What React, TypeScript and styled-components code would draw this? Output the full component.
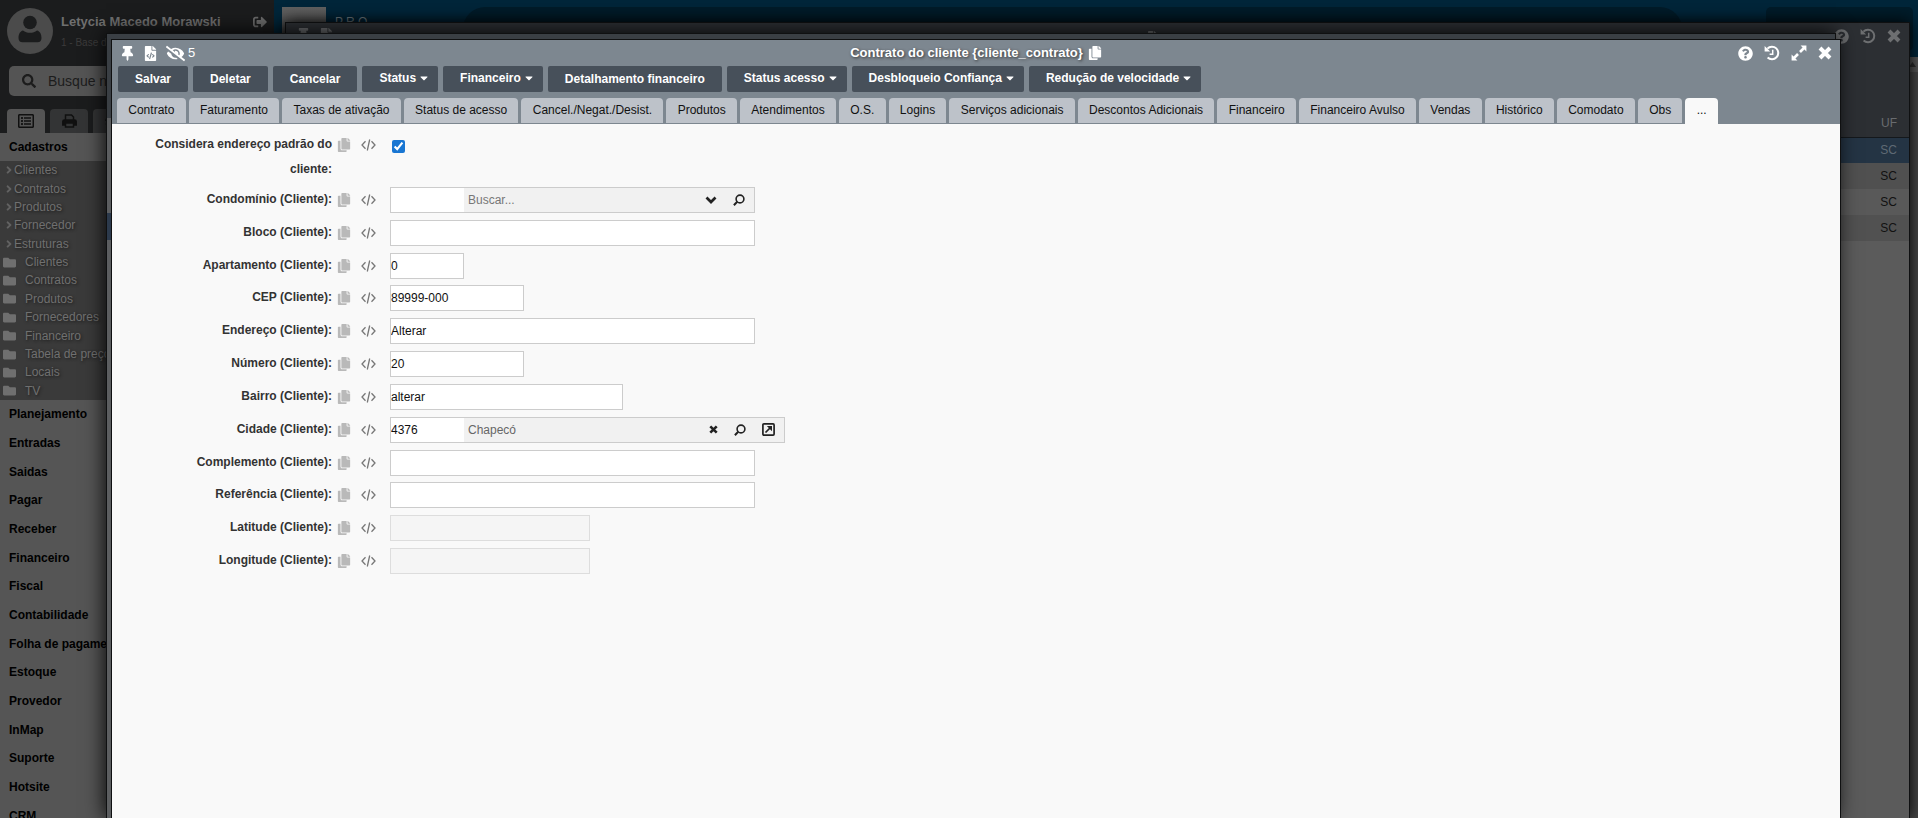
import React, { useId, useState } from "react";
import styled, { createGlobalStyle, css } from "styled-components";
import {
  FaAngleRight,
  FaCaretDown,
  FaCopy,
  FaEyeSlash,
  FaFileCode,
  FaFolder,
  FaQuestionCircle,
  FaRegListAlt,
  FaSearch,
  FaSignOutAlt,
  FaThumbtack,
} from "react-icons/fa";

const GlobalStyle = createGlobalStyle`
  * { box-sizing: border-box; }
  html, body, #root { height: 100%; }
  body {
    margin: 0;
    overflow: hidden;
    background: #5b5b5b;
    color: #333;
    font: 12px/16px "Liberation Sans", Arial, sans-serif;
  }
  button, input { font: inherit; color: inherit; margin: 0; }
  button { border: 0; padding: 0; background: none; cursor: pointer; }
  svg { display: block; }
`;

const Desktop = styled.div`
  position: relative;
  display: flex;
  height: 100vh;
  overflow: hidden;
`;

/* ---------- sidebar ---------- */

const Sidebar = styled.aside`
  flex: 0 0 274px;
  display: flex;
  flex-direction: column;
  overflow: hidden;
  background: #555;
`;

const SidebarTop = styled.div`
  background: #1b1c1d;
  padding: 8px 7px 0;
`;

const Profile = styled.div`
  display: flex;
  height: 46px;
`;

const ProfileText = styled.div`
  flex: 1;
  padding: 6px 0 0 8px;
`;

const ProfileName = styled.div`
  font-size: 13px;
  font-weight: bold;
  color: #6f6f6f;
`;

const ProfileBase = styled.div`
  margin-top: 5px;
  font-size: 10px;
  color: #3b3b3b;
`;

const LogoutButton = styled.button`
  align-self: flex-start;
  margin-top: 7px;
  color: #6a6a6a;
  font-size: 14px;
`;

const SearchBox = styled.label`
  display: flex;
  align-items: center;
  gap: 12px;
  height: 30px;
  margin: 12px 2px 13px;
  padding-left: 13px;
  border-radius: 5px;
  background: #545454;
  color: #1c1c1c;
  font-size: 14px;
`;

const SearchInput = styled.input`
  flex: 1;
  min-width: 0;
  padding: 0;
  border: 0;
  outline: 0;
  background: none;
  &::placeholder { color: #1c1c1c; opacity: 1; }
`;

const MenuTabs = styled.div`
  display: flex;
  gap: 5px;
`;

const MenuTab = styled.button<{ $active?: boolean }>`
  display: flex;
  align-items: center;
  justify-content: center;
  width: 38px;
  height: 24px;
  border-radius: 4px 4px 0 0;
  background: ${(p) => (p.$active ? "#555" : "#333435")};
  color: #101010;
  font-size: 16px;
`;

const MenuHeading = styled.button`
  display: flex;
  align-items: center;
  width: 100%;
  min-height: 28px;
  padding-left: 9px;
  color: #000;
  font-weight: bold;
  white-space: nowrap;
`;

const Tree = styled.ul`
  display: grid;
  grid-auto-rows: 1fr;
  flex: none;
  min-height: 239px;
  margin: 0;
  padding: 0 0 0 3px;
  list-style: none;
  background: #3a3a3a;
`;

const TreeItem = styled.li`
  display: flex;
  align-items: center;
  color: #707070;
  text-shadow: 1px 1px 3px #1c1c1c;
  white-space: nowrap;
`;

const TreeIcon = styled.span<{ $folder?: boolean }>`
  width: ${(p) => (p.$folder ? 22 : 11)}px;
  font-size: ${(p) => (p.$folder ? 13 : 12)}px;
  color: ${(p) => (p.$folder ? "#6f6f6f" : "#626262")};
`;

const Sections = styled.div`
  display: grid;
  grid-auto-rows: 1fr;
  flex: none;
  min-height: 430px;
`;

/* ---------- page behind the windows ---------- */

const Backdrop = styled.div`
  flex: 1;
  display: flex;
  flex-direction: column;
  min-width: 0;
`;

const TopBar = styled.header`
  display: flex;
  height: 57px;
  padding: 7px 5px 0 8px;
  background: #00263a;
`;

const LogoTile = styled.div`
  width: 44px;
  height: 44px;
  background: linear-gradient(#616161, #4c4c4c);
`;

const Brand = styled.div`
  width: 137px;
  padding: 7px 0 0 9px;
  color: #75828a;
  white-space: nowrap;
`;

const BarPanel = styled.div<{ $small?: boolean }>`
  height: 44px;
  background: #001c2a;
  ${(p) =>
    p.$small
      ? css`flex: 0 0 147px; margin-left: 84px; border-radius: 5px;`
      : css`flex: 1; border-radius: 22px;`}
`;

const ScrollTrack = styled.div`
  flex: 1;
  align-self: flex-end;
  width: 12px;
  background: #464646;
`;

const ScrollButton = styled.button`
  display: flex;
  align-items: center;
  justify-content: center;
  width: 12px;
  height: 15px;
  background: #575757;
`;

/* ---------- windows ---------- */

const Window = styled.section<{ $top: number; $left: number; $right: number }>`
  position: absolute;
  top: ${(p) => p.$top}px;
  left: ${(p) => p.$left}px;
  right: ${(p) => p.$right}px;
  bottom: 0;
  display: flex;
  flex-direction: column;
  border: 1px solid #0f1011;
  border-bottom: 0;
`;

const ListWindow = styled(Window)`
  background: #5b5b5b;
  box-shadow: 0 0 15px #000;
`;

const ListHeader = styled.div`
  display: grid;
  grid-template-columns: 1fr auto 1fr;
  align-items: start;
  height: 86px;
  padding: 5px 8px 0 10px;
  background: #2c2f33;
  color: #6d6f71;
`;

const ListCopy = styled.span`
  padding: 3px 0 0 104px;
`;

const ClientTable = styled.table`
  width: 100%;
  border-collapse: collapse;
  color: #111;
  text-align: right;
`;

const HeadCell = styled.th`
  height: 28px;
  padding: 0 12px;
  border-bottom: 1px solid #14181c;
  background: #2c2f33;
  color: #696c6f;
  font-weight: normal;
`;

const Cell = styled.td<{ $tone: string; $ink: string }>`
  height: 26px;
  padding: 0 12px;
  background: ${(p) => p.$tone};
  color: ${(p) => p.$ink};
`;

const MiddleWindow = styled(Window)`
  background: linear-gradient(#3a3f44 0 84px, #5c5e60 84px 179px, #2c3a4c 179px 206px, #5c5e60 206px);
  box-shadow: 0 0 20px #000;
`;

const ContractWindow = styled(Window)`
  background: #f9f9f9;
`;

const WindowHeader = styled.header`
  background: #7d8790;
`;

const TitleBar = styled.div`
  display: grid;
  grid-template-columns: 1fr auto 1fr;
  align-items: center;
  height: 26px;
  padding: 0 8px;
  color: #fff;
`;

const IconRow = styled.div<{ $end?: boolean; $gap: number }>`
  display: flex;
  align-items: center;
  justify-content: ${(p) => (p.$end ? "flex-end" : "flex-start")};
  gap: ${(p) => p.$gap}px;
`;

const IconButton = styled.button<{ $size?: number }>`
  display: flex;
  align-items: center;
  gap: 3px;
  font-size: ${(p) => p.$size ?? 15}px;
`;

const HiddenCount = styled.span`
  font-size: 13px;
`;

const Title = styled.h1`
  display: flex;
  align-items: center;
  gap: 5px;
  margin: 0;
  font-size: 13px;
  font-weight: bold;
  text-shadow: 1px 1px 3px #333;
`;

const Toolbar = styled.div`
  display: flex;
  gap: 5px;
  padding: 0 6px;
`;

const ToolButton = styled.button<{ $menu?: boolean }>`
  display: flex;
  align-items: center;
  gap: 2px;
  height: 26px;
  padding: ${(p) => (p.$menu ? "0 8px 2px 17px" : "0 17px")};
  border-radius: 2px;
  background: #47505a;
  color: #fff;
  font-weight: bold;
  white-space: nowrap;
`;

const TabStrip = styled.nav`
  display: flex;
  gap: 3px;
  max-width: 1611px;
  padding: 6px 5px 0;
`;

const Tab = styled.button<{ $active?: boolean }>`
  flex: 1 0 auto;
  height: 26px;
  padding: 0 11px 2px;
  border-bottom: 1px solid ${(p) => (p.$active ? "#f9f9f9" : "#7d8790")};
  border-radius: 4px 4px 0 0;
  background: ${(p) => (p.$active ? "#f9f9f9" : "#bdc2c9")};
  background-clip: padding-box;
  color: #111;
  white-space: nowrap;
`;

/* ---------- form ---------- */

const Form = styled.form`
  padding-top: 8px;
`;

const Fields = styled.div`
  display: grid;
  grid-auto-rows: 1fr;
  min-height: 394px;
  margin-top: 5px;
`;

const Row = styled.div`
  display: grid;
  grid-template-columns: 200px 12px 15px 1fr;
  align-items: start;
  padding-left: 20px;
`;

const FieldLabel = styled.label`
  font-weight: bold;
  line-height: 25px;
  text-align: right;
`;

const CopyButton = styled.button`
  margin: 6px 0 0 5px;
  color: #b9b9b9;
  font-size: 14px;
`;

const CodeButton = styled.button`
  margin: 7px 0 0 17px;
  color: #777;
`;

const Control = styled.div`
  display: flex;
  padding-left: 31px;
`;

const TextInput = styled.input<{ $width: number }>`
  width: ${(p) => p.$width}px;
  height: 26px;
  padding: 0;
  border: 1px solid #ccc;
  outline: 0;
  background: #fff;
  color: #111;
  &:disabled { border-color: #ddd; background: #f5f5f5; }
`;

const CheckInput = styled.input`
  width: 13px;
  height: 13px;
  margin: 8px 0 0 2px;
  accent-color: #1976d2;
`;

const Lookup = styled.div<{ $width: number }>`
  display: flex;
  align-items: center;
  width: ${(p) => p.$width}px;
  height: 26px;
  border: 1px solid #ccc;
  background: #f1f1f1;
  color: #222;
`;

const LookupCode = styled.input`
  width: 73px;
  height: 24px;
  padding: 0;
  border: 0;
  outline: 0;
  background: #fff;
  color: #111;
`;

const LookupText = styled.input`
  flex: 1;
  min-width: 0;
  padding: 0 4px;
  border: 0;
  outline: 0;
  background: none;
  color: #666;
  &::placeholder { color: #777; opacity: 1; }
`;

const LookupActions = styled.div`
  display: flex;
  align-items: center;
  gap: 16px;
  padding-right: 9px;
`;

/* ---------- drawings ---------- */

const Avatar = () => (
  <svg width="46" height="46" viewBox="0 0 46 46" aria-hidden="true">
    <circle cx="23" cy="23" r="23" fill="#4b4b4b" />
    <circle cx="23" cy="14.5" r="6.8" fill="#1b1c1d" />
    <path d="M16 22.500c2 1.600 4.300 2.300 7 2.300s5-.7 7-2.300c3 .6 4.500 3.800 4.500 7.500 0 2.800-1.500 4.200-4 4.200h-15c-2.500 0-4-1.400-4-4.200 0-3.700 1.500-6.900 4.500-7.500z" fill="#1b1c1d" />
  </svg>
);

const PrinterIcon = () => (
  <svg width="15" height="14" viewBox="0 0 15 14" fill="none" stroke="currentColor" strokeWidth="1.500" aria-hidden="true">
    <path d="M3.500 6V1h6l2 2v3" />
    <path d="M3 11H.8V7.500q0-1.500 1.500-1.500h10.400q1.500 0 1.500 1.500V11H12" fill="currentColor" />
    <path d="M3.500 9h8v4h-8z" fill="#333435" />
  </svg>
);

const GearIcon = () => (
  <svg width="15" height="15" viewBox="0 0 15 15" fill="none" stroke="currentColor" aria-hidden="true">
    <circle cx="7.500" cy="7.500" r="4" strokeWidth="3" />
    <circle cx="7.500" cy="7.500" r="6.300" strokeWidth="2" strokeDasharray="2.500 2.450" />
  </svg>
);

const CodeIcon = () => (
  <svg width="15" height="12" viewBox="0 0 15 12" fill="none" stroke="currentColor" strokeWidth="1.300" aria-hidden="true">
    <path d="M4.500 2.200 1 6l3.500 3.800M10.500 2.200 14 6l-3.500 3.800M8.700.5 6.300 11.500" />
  </svg>
);

const LensIcon = () => (
  <svg width="12" height="12" viewBox="0 0 12 12" fill="none" stroke="currentColor" strokeWidth="1.600" aria-hidden="true">
    <circle cx="7" cy="5" r="3.900" />
    <path d="M4.200 7.800.9 11.200" strokeWidth="2" />
  </svg>
);

const OpenIcon = () => (
  <svg width="13" height="13" viewBox="0 0 13 13" fill="none" stroke="currentColor" strokeWidth="1.700" aria-hidden="true">
    <rect x=".9" y=".9" width="11.200" height="11.200" rx="1" />
    <path d="M3.500 9.500 8 5" />
    <path d="M4.800 3h5.200v5.200z" fill="currentColor" stroke="none" />
  </svg>
);

const CrossIcon = ({ size = 14 }: { size?: number }) => (
  <svg width={size} height={size} viewBox="0 0 14 14" fill="none" stroke="currentColor" strokeWidth="4" aria-hidden="true">
    <path d="M2 2l10 10M12 2 2 12" />
  </svg>
);

const ChevronIcon = () => (
  <svg width="12" height="8" viewBox="0 0 12 8" fill="none" stroke="currentColor" strokeWidth="2.700" aria-hidden="true">
    <path d="M1.500 1.500 6 6l4.500-4.500" />
  </svg>
);

const HistoryIcon = () => (
  <svg width="16" height="16" viewBox="0 0 16 16" fill="none" stroke="currentColor" strokeWidth="2" aria-hidden="true">
    <path d="M3.400 3.600A6.300 6.300 0 1 1 3.600 12.500" />
    <path d="M.6.900v5.500h5.500z" fill="currentColor" stroke="none" />
    <path d="M8.700 4.800v4.400H5.600" strokeWidth="1.500" />
  </svg>
);

const ExpandIcon = () => (
  <svg width="16" height="16" viewBox="0 0 16 16" fill="currentColor" aria-hidden="true">
    <path d="M9.600.6h5.800v5.800zM.6 9.600v5.800h5.800z" />
    <path d="M9 7l4-4M7 9l-4 4" stroke="currentColor" strokeWidth="2.600" />
  </svg>
);

const ScrollArrow = () => (
  <svg width="7" height="5" viewBox="0 0 7 5" aria-hidden="true">
    <path d="M0 5 3.500 0 7 5z" fill="#2e2e2e" />
  </svg>
);

/* ---------- data ---------- */

const links = ["Clientes", "Contratos", "Produtos", "Fornecedor", "Estruturas"];
const folders = ["Clientes", "Contratos", "Produtos", "Fornecedores", "Financeiro", "Tabela de preços", "Locais", "TV"];
const sections = [
  "Planejamento", "Entradas", "Saidas", "Pagar", "Receber", "Financeiro", "Fiscal", "Contabilidade",
  "Folha de pagamento", "Estoque", "Provedor", "InMap", "Suporte", "Hotsite", "CRM",
];

const actions: { label: string; menu?: boolean }[] = [
  { label: "Salvar" },
  { label: "Deletar" },
  { label: "Cancelar" },
  { label: "Status", menu: true },
  { label: "Financeiro", menu: true },
  { label: "Detalhamento financeiro" },
  { label: "Status acesso", menu: true },
  { label: "Desbloqueio Confiança", menu: true },
  { label: "Redução de velocidade", menu: true },
];

const tabs = [
  "Contrato", "Faturamento", "Taxas de ativação", "Status de acesso", "Cancel./Negat./Desist.", "Produtos",
  "Atendimentos", "O.S.", "Logins", "Serviços adicionais", "Descontos Adicionais", "Financeiro",
  "Financeiro Avulso", "Vendas", "Histórico", "Comodato", "Obs", "...",
];

const clientRows = [
  { uf: "SC", tone: "#243444", ink: "#5f6a74" },
  { uf: "SC", tone: "#505050", ink: "#111" },
  { uf: "SC", tone: "#595959", ink: "#111" },
  { uf: "SC", tone: "#515151", ink: "#111" },
];

/* ---------- form parts ---------- */

function Field({ label, children }: { label: string; children: (id: string) => React.ReactNode }) {
  const id = useId();
  return (
    <Row>
      <FieldLabel htmlFor={id}>{label}</FieldLabel>
      <CopyButton type="button" aria-label="Copiar"><FaCopy /></CopyButton>
      <CodeButton type="button" aria-label="Ver código"><CodeIcon /></CodeButton>
      <Control>{children(id)}</Control>
    </Row>
  );
}

function TextField({ label, width, value = "", disabled }: { label: string; width: number; value?: string; disabled?: boolean }) {
  return (
    <Field label={label}>
      {(id) => <TextInput id={id} $width={width} defaultValue={value} disabled={disabled} />}
    </Field>
  );
}

export default function App() {
  const [activeTab, setActiveTab] = useState("...");
  return (
    <>
      <GlobalStyle />
      <Desktop>
        <Sidebar>
          <SidebarTop>
            <Profile>
              <Avatar />
              <ProfileText>
                <ProfileName>Letycia Macedo Morawski</ProfileName>
                <ProfileBase>1 - Base de</ProfileBase>
              </ProfileText>
              <LogoutButton aria-label="Sair"><FaSignOutAlt /></LogoutButton>
            </Profile>
            <SearchBox>
              <FaSearch />
              <SearchInput placeholder="Busque no menu" aria-label="Busque no menu" />
            </SearchBox>
            <MenuTabs>
              <MenuTab $active aria-label="Menu"><FaRegListAlt /></MenuTab>
              <MenuTab aria-label="Imprimir"><PrinterIcon /></MenuTab>
              <MenuTab aria-label="Configurações"><GearIcon /></MenuTab>
            </MenuTabs>
          </SidebarTop>
          <MenuHeading>Cadastros</MenuHeading>
          <Tree>
            {links.map((name) => (
              <TreeItem key={name}><TreeIcon><FaAngleRight /></TreeIcon>{name}</TreeItem>
            ))}
            {folders.map((name) => (
              <TreeItem key={name}><TreeIcon $folder><FaFolder /></TreeIcon>{name}</TreeItem>
            ))}
          </Tree>
          <Sections>
            {sections.map((name) => <MenuHeading key={name}>{name}</MenuHeading>)}
          </Sections>
        </Sidebar>

        <Backdrop>
          <TopBar>
            <LogoTile />
            <Brand>P R O —</Brand>
            <BarPanel />
            <BarPanel $small />
          </TopBar>
          <ScrollTrack>
            <ScrollButton aria-label="Rolar para cima"><ScrollArrow /></ScrollButton>
          </ScrollTrack>
        </Backdrop>

        <ListWindow $top={22} $left={285} $right={8}>
          <ListHeader>
            <IconRow $gap={8}>
              <FaThumbtack size={15} />
              <FaFileCode size={15} />
            </IconRow>
            <ListCopy><FaCopy size={13} /></ListCopy>
            <IconRow $end $gap={11}>
              <IconButton aria-label="Ajuda da lista"><FaQuestionCircle /></IconButton>
              <IconButton aria-label="Histórico da lista"><HistoryIcon /></IconButton>
              <IconButton aria-label="Fechar lista"><CrossIcon /></IconButton>
            </IconRow>
          </ListHeader>
          <ClientTable>
            <thead>
              <tr><HeadCell>UF</HeadCell></tr>
            </thead>
            <tbody>
              {clientRows.map((row, i) => (
                <tr key={i}><Cell $tone={row.tone} $ink={row.ink}>{row.uf}</Cell></tr>
              ))}
            </tbody>
          </ClientTable>
        </ListWindow>

        <MiddleWindow $top={33} $left={106} $right={82} />

        <ContractWindow $top={39} $left={111} $right={77}>
          <WindowHeader>
            <TitleBar>
              <IconRow $gap={8}>
                <IconButton aria-label="Fixar"><FaThumbtack /></IconButton>
                <IconButton aria-label="Código"><FaFileCode /></IconButton>
                <IconButton $size={19} aria-label="Campos ocultos">
                  <FaEyeSlash /><HiddenCount>5</HiddenCount>
                </IconButton>
              </IconRow>
              <Title>
                Contrato do cliente {"{cliente_contrato}"}
                <IconButton $size={14} aria-label="Copiar título"><FaCopy /></IconButton>
              </Title>
              <IconRow $end $gap={11}>
                <IconButton aria-label="Ajuda"><FaQuestionCircle /></IconButton>
                <IconButton aria-label="Histórico"><HistoryIcon /></IconButton>
                <IconButton aria-label="Expandir"><ExpandIcon /></IconButton>
                <IconButton aria-label="Fechar"><CrossIcon /></IconButton>
              </IconRow>
            </TitleBar>
            <Toolbar>
              {actions.map((a) => (
                <ToolButton key={a.label} $menu={a.menu}>
                  {a.label}
                  {a.menu && <FaCaretDown size={12} />}
                </ToolButton>
              ))}
            </Toolbar>
            <TabStrip>
              {tabs.map((name) => (
                <Tab key={name} $active={name === activeTab} onClick={() => setActiveTab(name)}>{name}</Tab>
              ))}
            </TabStrip>
          </WindowHeader>

          <Form>
            <Field label="Considera endereço padrão do cliente:">
              {(id) => <CheckInput id={id} type="checkbox" defaultChecked />}
            </Field>
            <Fields>
              <Field label="Condomínio (Cliente):">
                {(id) => (
                  <Lookup $width={365}>
                    <LookupCode id={id} />
                    <LookupText placeholder="Buscar..." aria-label="Buscar condomínio" />
                    <LookupActions>
                      <IconButton type="button" aria-label="Abrir lista"><ChevronIcon /></IconButton>
                      <IconButton type="button" aria-label="Pesquisar condomínio"><LensIcon /></IconButton>
                    </LookupActions>
                  </Lookup>
                )}
              </Field>
              <TextField label="Bloco (Cliente):" width={365} />
              <TextField label="Apartamento (Cliente):" width={74} value="0" />
              <TextField label="CEP (Cliente):" width={134} value="89999-000" />
              <TextField label="Endereço (Cliente):" width={365} value="Alterar" />
              <TextField label="Número (Cliente):" width={134} value="20" />
              <TextField label="Bairro (Cliente):" width={233} value="alterar" />
              <Field label="Cidade (Cliente):">
                {(id) => (
                  <Lookup $width={395}>
                    <LookupCode id={id} defaultValue="4376" />
                    <LookupText defaultValue="Chapecó" aria-label="Nome da cidade" />
                    <LookupActions>
                      <IconButton type="button" aria-label="Limpar"><CrossIcon size={9} /></IconButton>
                      <IconButton type="button" aria-label="Pesquisar cidade"><LensIcon /></IconButton>
                      <IconButton type="button" aria-label="Abrir cadastro"><OpenIcon /></IconButton>
                    </LookupActions>
                  </Lookup>
                )}
              </Field>
              <TextField label="Complemento (Cliente):" width={365} />
              <TextField label="Referência (Cliente):" width={365} />
              <TextField label="Latitude (Cliente):" width={200} disabled />
              <TextField label="Longitude (Cliente):" width={200} disabled />
            </Fields>
          </Form>
        </ContractWindow>
      </Desktop>
    </>
  );
}
